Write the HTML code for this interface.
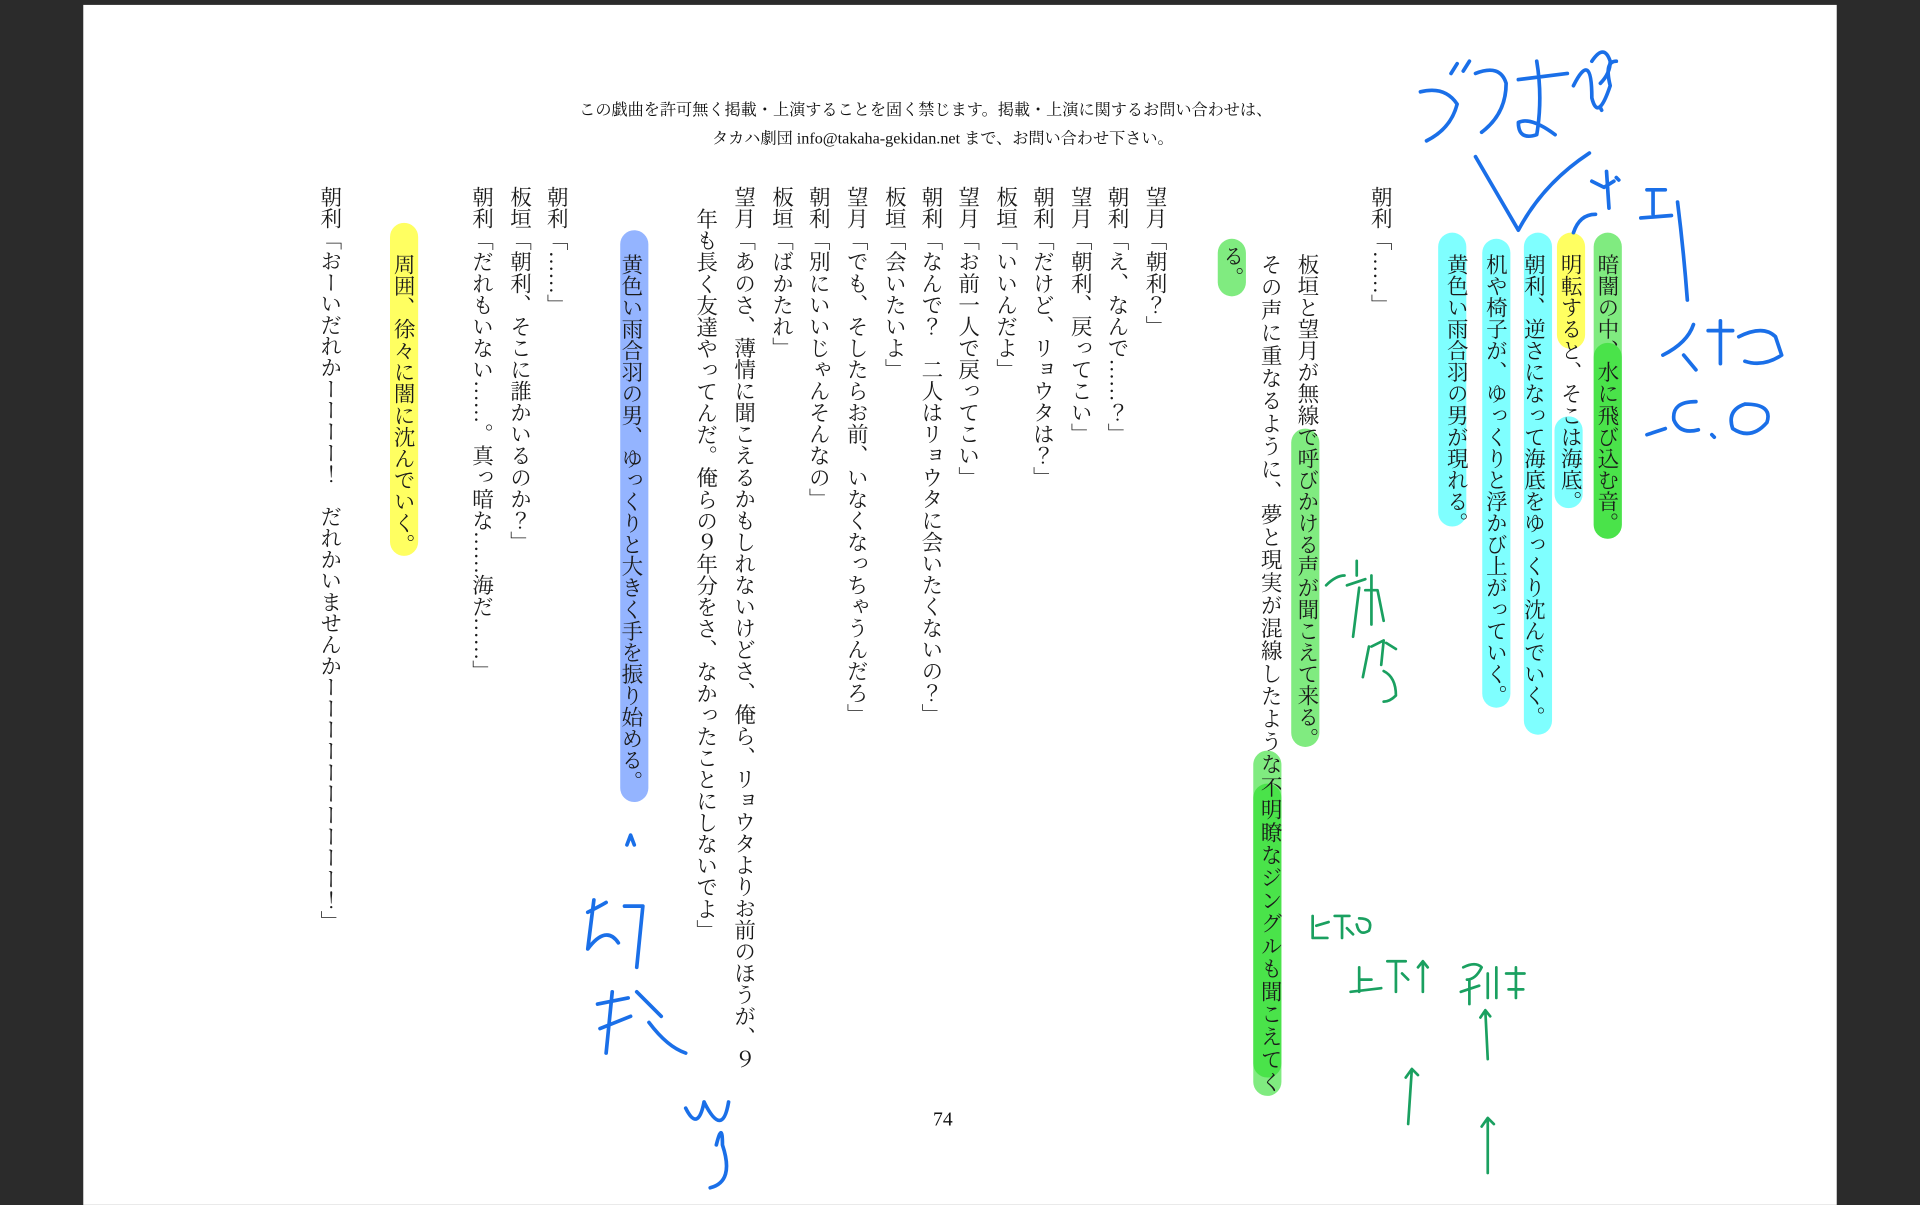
<!DOCTYPE html>
<html><head><meta charset="utf-8">
<style>
html,body{margin:0;padding:0;background:#2b2b2b;width:1920px;height:1200px;overflow:hidden}
#s{position:absolute;left:0;top:0;width:1568px;height:980px;transform:scale(1.22449);transform-origin:0 0}
#page{position:absolute;left:68px;top:4px;width:1432px;height:980px;background:#fff}
.h{position:absolute;left:0;width:1540px;text-align:center;font-family:"Liberation Serif","Noto Serif CJK JP","Noto Serif CJK SC","IPAMincho",serif;font-size:13.2px;color:#111}
.c{position:absolute;writing-mode:vertical-rl;font-family:"Liberation Serif","Noto Serif CJK JP","Noto Serif CJK SC","IPAMincho",serif;font-size:17.6px;line-height:20px;color:#1a1a1a;white-space:nowrap;transform:translateX(-10px)}
.hl{position:absolute;border-radius:12px;width:23px;transform:translateX(-11.5px)}
.g{background:rgba(60,225,60,.65)}
.g2{background:rgba(30,220,30,.55)}
.cy{background:rgba(0,255,255,.5)}
.y{background:rgba(255,255,0,.62)}
.b{background:rgba(90,140,255,.65)}
</style></head><body>
<div id="s">
<div id="page"></div>
<div class="h" style="top:79px;left:-14px">この戯曲を許可無く掲載・上演することを固く禁じます。掲載・上演に関するお問い合わせは、</div>
<div class="h" style="top:102px">タカハ劇団 info@takaha-gekidan.net まで、お問い合わせ下さい。</div>
<div class="h" style="top:906px;font-size:16px">74</div>

<div class="hl g" style="left:1313px;top:190px;height:250px"></div>
<div class="hl g2" style="left:1313px;top:280px;height:160px"></div>
<div class="hl y" style="left:1283px;top:190px;height:95px"></div>
<div class="hl cy" style="left:1281px;top:340px;height:75px"></div>
<div class="hl cy" style="left:1256px;top:190px;height:410px"></div>
<div class="hl cy" style="left:1222px;top:195px;height:383px"></div>
<div class="hl cy" style="left:1186px;top:190px;height:240px"></div>
<div class="hl g" style="left:1066px;top:350px;height:260px"></div>
<div class="hl g" style="left:1035px;top:613px;height:282px"></div>
<div class="hl g2" style="left:1035px;top:640px;height:240px"></div>
<div class="hl g" style="left:1006px;top:195px;height:47px"></div>
<div class="hl b" style="left:518px;top:188px;height:467px"></div>
<div class="hl y" style="left:330px;top:182px;height:272px"></div>

<div class="c" style="left:1313px;top:207px">暗闇の中、水に飛び込む音。</div>
<div class="c" style="left:1283px;top:207px">明転すると、そこは海底。</div>
<div class="c" style="left:1253px;top:207px">朝利、逆さになって海底をゆっくり沈んでいく。</div>
<div class="c" style="left:1222px;top:207px">机や椅子が、ゆっくりと浮かび上がっていく。</div>
<div class="c" style="left:1190px;top:207px">黄色い雨合羽の男が現れる。</div>
<div class="c" style="left:1128px;top:152px">朝利「……」</div>
<div class="c" style="left:1068px;top:207px">板垣と望月が無線で呼びかける声が聞こえて来る。</div>
<div class="c" style="left:1038px;top:207px;letter-spacing:0.95px">その声に重なるように、夢と現実が混線したような不明瞭なジングルも聞こえてく</div>
<div class="c" style="left:1007px;top:200px">る。</div>
<div class="c" style="left:944px;top:152px">望月「朝利？」</div>
<div class="c" style="left:913px;top:152px">朝利「え、なんで……？」</div>
<div class="c" style="left:883px;top:152px">望月「朝利、戻ってこい」</div>
<div class="c" style="left:852px;top:152px">朝利「だけど、リョウタは？」</div>
<div class="c" style="left:822px;top:152px">板垣「いいんだよ」</div>
<div class="c" style="left:791px;top:152px">望月「お前一人で戻ってこい」</div>
<div class="c" style="left:761px;top:152px">朝利「なんで？　二人はリョウタに会いたくないの？」</div>
<div class="c" style="left:731px;top:152px">板垣「会いたいよ」</div>
<div class="c" style="left:700px;top:152px">望月「でも、そしたらお前、いなくなっちゃうんだろ」</div>
<div class="c" style="left:669px;top:152px">朝利「別にいいじゃんそんなの」</div>
<div class="c" style="left:639px;top:152px">板垣「ばかたれ」</div>
<div class="c" style="left:608px;top:152px">望月「あのさ、薄情に聞こえるかもしれないけどさ、俺ら、リョウタよりお前のほうが、９</div>
<div class="c" style="left:577px;top:170px">年も長く友達やってんだ。俺らの９年分をさ、なかったことにしないでよ」</div>
<div class="c" style="left:516px;top:207px">黄色い雨合羽の男、ゆっくりと大きく手を振り始める。</div>
<div class="c" style="left:455px;top:152px">朝利「……」</div>
<div class="c" style="left:425px;top:152px">板垣「朝利、そこに誰かいるのか？」</div>
<div class="c" style="left:394px;top:152px">朝利「だれもいない……。真っ暗な……海だ……」</div>
<div class="c" style="left:330px;top:207px">周囲、徐々に闇に沈んでいく。</div>
<div class="c" style="left:270px;top:152px;letter-spacing:-0.2px">朝利「おーいだれかーーーー！　だれかいませんかーーーーーーーーーー！」</div>

<svg style="position:absolute;left:0;top:0" width="1568" height="980" fill="none" stroke-linecap="round" stroke-linejoin="round">
<g stroke="#1a6fe8" stroke-width="3">
<path d="M1205 128 L1240 188 Q1260 150 1298 125"/>
<path d="M1160 75 q20 -5 30 10 q-5 20 -25 30 M1185 60 l5 -8 M1195 58 l5 -8"/>
<path d="M1205 60 q20 -8 25 8 q0 25 -20 40"/>
<path d="M1240 65 l40 -5 M1255 50 q5 30 0 60 q-15 5 -15 -10 q10 -5 30 10"/>
<path d="M1285 70 q15 -30 15 10 q5 20 15 -10 q-5 -20 5 -20"/>
<path d="M1300 50 q10 -15 15 0 q0 10 -8 18 M1307 88 l1 2"/>
<path d="M1285 190 q5 -15 18 -15"/>
<path d="M1300 148 l10 5 l8 -5 M1312 140 l2 30 M1320 145 l2 2"/>
<path d="M1345 155 l15 0 M1350 155 l0 20 M1340 178 l25 -2 M1370 165 q5 40 8 80"/>
<path d="M1358 290 q20 -10 25 -25 M1375 290 l10 12 M1395 270 l20 0 M1405 262 l0 35 M1420 275 q20 -10 30 0 l5 15 M1425 295 q15 5 30 -5"/>
<path d="M1345 355 l15 -5 M1385 328 q-20 0 -18 15 q5 12 20 8 M1398 355 l2 2 M1425 330 q-15 5 -10 20 q15 10 28 -5 q5 -15 -18 -15"/>
<path d="M518 690 l-3 -8 l-3 8 M480 745 q10 -5 15 -8 M485 735 l-5 40 q15 -20 25 -5 M510 740 l15 0 l-5 50 M488 820 l25 -5 M500 810 l-5 50 M490 840 l25 -10 M520 810 l20 20 M530 835 q15 20 30 25 M560 905 q10 20 15 -5 M575 900 q15 30 20 0 M585 935 q5 -20 5 0 q10 30 -10 35"/>
</g>
<g stroke="#1aa060" stroke-width="2.2">
<path d="M1083 478 q8 -8 15 -8 M1108 458 l0 12 M1100 478 l15 -5 M1110 480 l-5 40 M1115 482 l10 0 l5 25 M1120 470 l0 40"/>
<path d="M1120 528 l10 -5 l-2 20 M1118 528 l-5 25 M1132 525 l8 5 M1130 548 q10 5 10 20 q-5 5 -10 5"/>
<path d="M1072 748 l0 18 l12 0 M1075 756 l10 -3 M1090 748 l12 0 M1096 748 l0 18 M1100 758 l5 5 M1110 750 q12 0 8 10 q-8 5 -10 -5"/>
<path d="M1103 810 l25 -3 M1110 790 l0 20 M1110 800 l10 0 M1133 785 l15 0 M1140 785 l0 25 M1145 795 l5 5 M1162 810 l0 -25 l-4 5 M1162 785 l4 5"/>
<path d="M1195 790 q10 -5 15 0 q-5 10 -12 10 M1193 810 l15 -5 M1200 800 l0 20 M1215 795 l0 20 M1222 790 l0 25 M1230 795 l15 0 M1238 790 l0 25 M1232 808 l12 0"/>
<path d="M1150 918 l3 -45 l-5 7 M1153 873 l5 5 M1215 865 l-2 -40 l-4 6 M1213 825 l4 5 M1215 958 l0 -45 l-5 7 M1215 913 l5 5"/>
</g>
</svg>
</div>
</body></html>
